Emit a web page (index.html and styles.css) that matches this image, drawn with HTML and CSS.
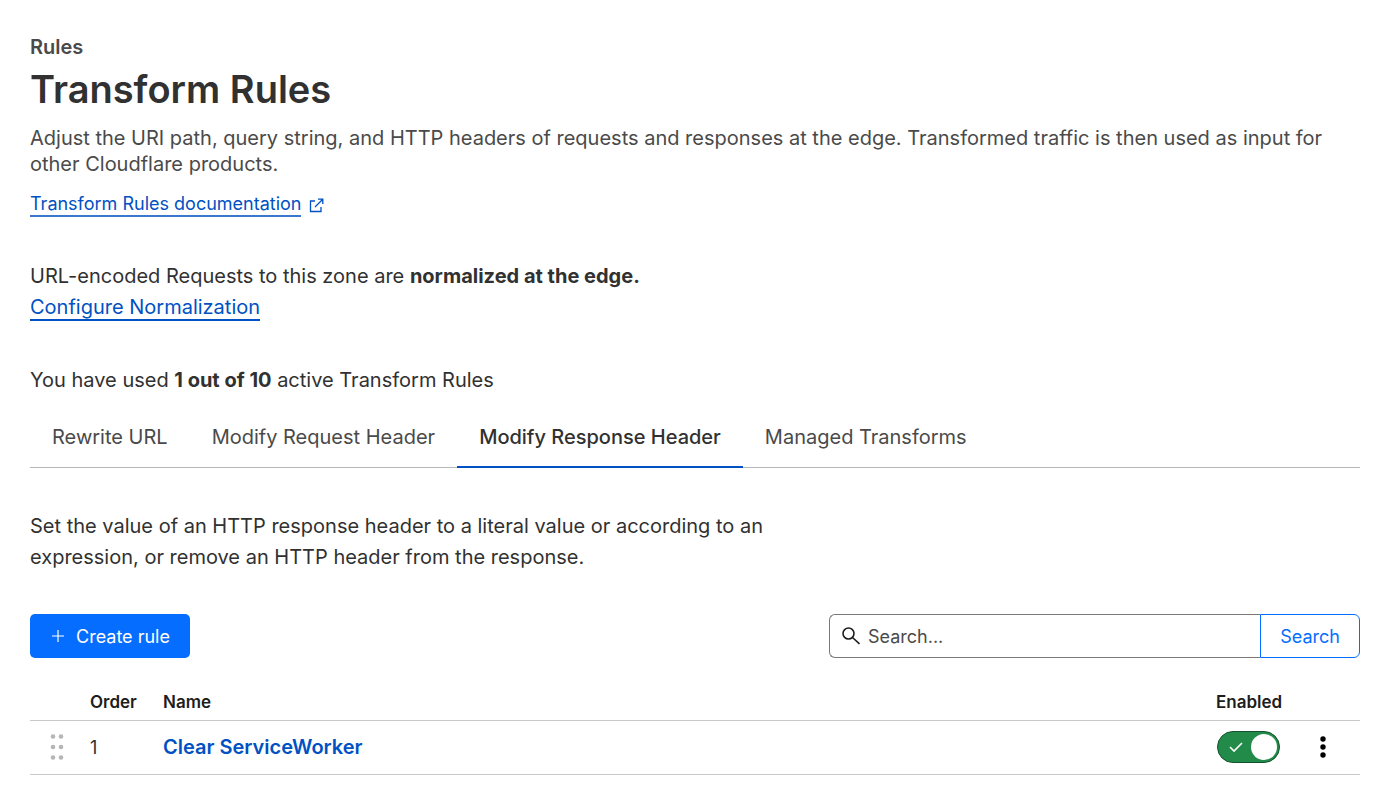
FILE: index.html
```html
<!DOCTYPE html>
<html lang="en">
<head>
<meta charset="utf-8">
<meta name="viewport" content="width=device-width, initial-scale=1">
<title>Transform Rules</title>
<link rel="stylesheet" href="styles.css">
</head>
<body>
<main class="page">
  <header class="page-header">
    <p class="eyebrow">Rules</p>
    <h1 class="title">Transform Rules</h1>
    <p class="lead">Adjust the URI path, query string, and HTTP headers of requests and responses at the edge. Transformed traffic is then used as input for other Cloudflare products.</p>
    <p class="docs">
      <a class="link link-docs" href="#docs">Transform Rules documentation</a>
      <svg class="external" viewBox="0 0 15 15" aria-hidden="true"><path d="M6 3H1.500v10.500H12V9M9 1.200h4.800V6M13.500 1.500L6 9"/></svg>
    </p>
  </header>

  <section class="normalization">
    <p class="text">URL-encoded Requests to this zone are <strong>normalized at the edge.</strong></p>
    <p class="text"><a class="link" href="#normalization">Configure Normalization</a></p>
  </section>

  <p class="text usage">You have used <strong>1 out of 10</strong> active Transform Rules</p>

  <nav class="tabs" aria-label="Transform rule types">
    <a class="tab" href="#rewrite">Rewrite URL</a>
    <a class="tab" href="#request">Modify Request Header</a>
    <a class="tab tab-active" href="#response" aria-current="page">Modify Response Header</a>
    <a class="tab" href="#managed">Managed Transforms</a>
  </nav>

  <p class="text description">Set the value of an HTTP response header to a literal value or according to an expression, or remove an HTTP header from the response.</p>

  <div class="toolbar">
    <button class="create" type="button">
      <svg class="plus" viewBox="0 0 12 12" aria-hidden="true"><path d="M6 0v12M0 6h12"/></svg>
      Create rule
    </button>
    <form class="search" role="search">
      <label class="search-field">
        <svg class="magnifier" viewBox="0 0 18 18" aria-hidden="true"><circle cx="6.500" cy="6.500" r="5.500"/><path d="M10.500 10.500l7 6.500"/></svg>
        <input class="search-input" type="text" placeholder="Search..." aria-label="Search rules">
      </label>
      <button class="search-button" type="button">Search</button>
    </form>
  </div>

  <table class="rules">
    <thead>
      <tr>
        <th class="col-drag"></th>
        <th class="col-order">Order</th>
        <th>Name</th>
        <th class="col-enabled">Enabled</th>
        <th class="col-menu"></th>
      </tr>
    </thead>
    <tbody>
      <tr>
        <td class="col-drag"><svg class="grip" viewBox="0 0 14 26" aria-hidden="true"><circle cx="3" cy="2.500" r="2.300"/><circle cx="11" cy="2.500" r="2.300"/><circle cx="3" cy="13" r="2.300"/><circle cx="11" cy="13" r="2.300"/><circle cx="3" cy="23.500" r="2.300"/><circle cx="11" cy="23.500" r="2.300"/></svg></td>
        <td>1</td>
        <td><a class="rule-name" href="#rule">Clear ServiceWorker</a></td>
        <td class="col-enabled">
          <label class="toggle">
            <input class="toggle-input" type="checkbox" checked aria-label="Enable Clear ServiceWorker">
            <svg class="check" viewBox="0 0 14 12" aria-hidden="true"><path d="M1 6l4 4 8-8"/></svg>
            <span class="knob"></span>
          </label>
        </td>
        <td class="col-menu">
          <button class="menu" type="button" aria-label="More actions"><svg class="dots" viewBox="0 0 6 22" aria-hidden="true"><circle cx="3" cy="3" r="2.700"/><circle cx="3" cy="11" r="2.700"/><circle cx="3" cy="19" r="2.700"/></svg></button>
        </td>
      </tr>
    </tbody>
  </table>
</main>
</body>
</html>
```
FILE: styles.css
```css
* { box-sizing: border-box; }

body {
  margin: 0;
  background: #fff;
  color: #313131;
  font: 20px/31px Inter, "Liberation Sans", sans-serif;
}

p, h1 { margin: 0; }
strong { font-weight: 700; }
button, input { font: inherit; }

.page { padding: 34px 40px 32px 30px; }

.eyebrow { color: #4a4a4a; font-weight: 600; line-height: 26px; }
.title { font-size: 38px; font-weight: 600; line-height: 50px; margin-top: 4px; }
.lead { color: #4a4a4a; line-height: 26px; margin-top: 11px; }
.docs { display: flex; align-items: center; gap: 8px; margin-top: 16px; font-size: 18px; line-height: 24px; }
.link { color: #0051c3; text-decoration: none; border-bottom: 2px solid #0051c3; }
.link-docs { line-height: 22px; border-bottom-color: #3a78d0; }
.external { width: 15px; height: 15px; fill: none; stroke: #0051c3; stroke-width: 1.3; }

.normalization { margin-top: 44px; }
.usage { margin-top: 42px; }

.tabs { display: flex; margin-top: 10px; border-bottom: 1px solid #b6b6b6; }
.tab { padding: 16px 22px 13px; margin-bottom: -1px; border-bottom: 2px solid transparent; color: #4a4a4a; text-decoration: none; }
.tab-active { border-color: #0051c3; color: #313131; font-weight: 500; }

.description { max-width: 760px; margin-top: 43px; }

.toolbar { display: flex; justify-content: space-between; gap: 32px; margin-top: 41px; font-size: 18px; }
.create { display: flex; align-items: center; gap: 12px; height: 44px; padding: 0 20px 0 22px; border: 0; border-radius: 5px; background: #056dff; color: #fff; }
.plus { width: 12px; height: 12px; stroke: #fff; stroke-width: 1.2; }
.search { display: flex; flex: 0 1 531px; height: 44px; }
.search-field { display: flex; flex: 1; align-items: center; gap: 8px; min-width: 0; padding-left: 12px; border: 1px solid #797979; border-right: 0; border-radius: 6px 0 0 6px; }
.magnifier { flex: none; width: 18px; height: 18px; fill: none; stroke: #1d1d1d; stroke-width: 1.6; }
.search-input { width: 100%; min-width: 0; padding: 0; border: 0; outline: 0; background: none; color: #313131; }
.search-input::placeholder { color: #4a4a4a; opacity: 1; }
.search-button { padding: 0 19px; border: 1px solid #056dff; border-radius: 0 6px 6px 0; background: #fff; color: #056dff; }

.rules { width: 100%; margin-top: 26px; border-collapse: collapse; table-layout: fixed; font-size: 18px; text-align: left; }
.rules th { height: 36px; padding: 2px 0 0; color: #1d1d1d; font-size: 17px; font-weight: 600; border-bottom: 1px solid #c8c8c8; }
.rules td { height: 54px; padding: 0; border-bottom: 1px solid #c8c8c8; }
.rules .col-drag { width: 60px; padding-left: 20px; }
.rules .col-order { width: 73px; }
.rules .col-enabled { width: 104px; }
.rules td.col-enabled { padding-left: 1px; }
.rules .col-menu { width: 40px; }
.rule-name { color: #0051c3; font-size: 20px; font-weight: 600; text-decoration: none; }
.grip { display: block; width: 14px; height: 26px; fill: #b6b6b6; }

.toggle { display: flex; align-items: center; justify-content: space-between; width: 63px; height: 32px; padding: 0 2px 0 11px; border: 1px solid #14532d; border-radius: 16px; background: #228b49; }
.toggle-input { position: absolute; opacity: 0; }
.check { width: 14px; height: 12px; fill: none; stroke: #fff; stroke-width: 1.6; }
.knob { width: 26px; height: 26px; border-radius: 50%; background: #fff; }
.menu { display: block; padding: 0; border: 0; background: none; }
.dots { display: block; width: 6px; height: 22px; fill: #000; }
```
